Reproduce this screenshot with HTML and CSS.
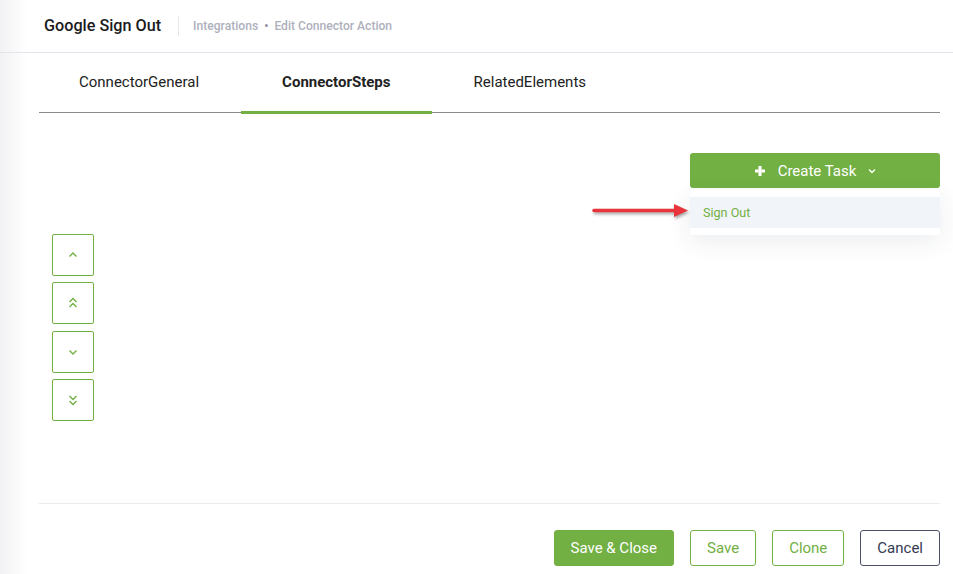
FILE: index.html
```html
<html>
    <head>
        <link rel="stylesheet" href="styles.css">
    </head>
    <body>
        <div class="header">
            <div class="title">Google Sign Out</div>
            <div class="crumbs">
                <span>Integrations</span>
                <span class="dot">&bull;</span>
                <span>Edit Connector Action</span>
            </div>
        </div>
        <div class="main">
            <div class="tabs">
                <div class="tab">ConnectorGeneral</div>
                <div class="tab active">ConnectorSteps</div>
                <div class="tab">RelatedElements</div>
            </div>
            <div class="panel">
                <div class="toolbar">
                    <div class="create-wrap">
                        <button class="create">
                            <svg width="12" height="12" viewBox="0 0 12 12"><path d="M6 1v10M1 6h10" stroke="#fff" stroke-width="3"/></svg>
                            <span>Create Task</span>
                            <svg width="8" height="6" viewBox="0 0 8 6"><path d="M1 1.5l3 3 3-3" fill="none" stroke="#fff" stroke-width="1.3"/></svg>
                        </button>
                        <div class="menu">
                            <div class="menu-item">Sign Out</div>
                        </div>
                        <svg class="pointer" width="100" height="20" viewBox="0 0 100 20">
                            <path d="M2 9.5h82" stroke="#e8343a" stroke-width="3.5" stroke-linecap="round"/>
                            <path d="M82 3l14 6.5-14 6.5z" fill="#e8343a"/>
                        </svg>
                    </div>
                </div>
                <div class="movers">
                    <button class="mover"><svg width="10" height="10" viewBox="0 0 10 10"><path d="M1.5 6.5l3.5-3.5 3.5 3.5" fill="none" stroke="#72b043" stroke-width="1.4"/></svg></button>
                    <button class="mover"><svg width="10" height="12" viewBox="0 0 10 12"><path d="M1.5 5l3.5-3.5 3.5 3.5M1.5 10l3.5-3.5 3.5 3.5" fill="none" stroke="#72b043" stroke-width="1.4"/></svg></button>
                    <button class="mover"><svg width="10" height="10" viewBox="0 0 10 10"><path d="M1.5 3.5l3.5 3.5 3.5-3.5" fill="none" stroke="#72b043" stroke-width="1.4"/></svg></button>
                    <button class="mover"><svg width="10" height="12" viewBox="0 0 10 12"><path d="M1.5 2l3.5 3.5 3.5-3.5M1.5 7l3.5 3.5 3.5-3.5" fill="none" stroke="#72b043" stroke-width="1.4"/></svg></button>
                </div>
            </div>
            <div class="footer">
                <button class="btn primary">Save &amp; Close</button>
                <button class="btn outline">Save</button>
                <button class="btn outline">Clone</button>
                <button class="btn cancel">Cancel</button>
            </div>
        </div>
    </body>
</html>
```
FILE: styles.css
```css
body{
    margin: 0;
    font-family: Roboto, "Liberation Sans", sans-serif;
    background: linear-gradient(to right, #f2f2f4, #fff 28px);
    color: #1d1d1f;
}
.header{
    height: 52px;
    display: flex;
    align-items: center;
    padding-left: 44px;
    border-bottom: 1px solid #e1e5ec;
}
.title{
    font-size: 16.2px;
    font-weight: 500;
    color: #1b1b1d;
    padding-right: 17px;
    border-right: 1px solid #e6e6ea;
    line-height: 20px;
}
.crumbs{
    padding-left: 14px;
    font-size: 12.1px;
    color: #aeb0bc;
    font-weight: 500;
}
.dot{
    margin: 0 3px;
    color: #8d8f9b;
}
.main{
    padding: 0 13px 0 39px;
}
.tabs{
    display: flex;
    height: 59px;
    border-bottom: 1px solid #8a8a8a;
}
.tabs .tab:first-child{
    margin-left: -1.5px;
}
.tab{
    padding: 0 41.5px 2px;
    font-size: 15px;
    color: #222;
    display: flex;
    align-items: center;
}
.tab.active{
    font-weight: 700;
    border-bottom: 3px solid #72b043;
    margin-bottom: -2px;
    padding-bottom: 0;
}
.panel{
    height: 390px;
    padding-top: 40px;
    box-sizing: border-box;
}
.toolbar{
    display: flex;
    justify-content: flex-end;
}
.create-wrap{
    position: relative;
    width: 250px;
}
.create{
    width: 100%;
    height: 35px;
    border: none;
    border-radius: 3px;
    background-color: #72b043;
    color: white;
    font-family: inherit;
    font-size: 15px;
    display: flex;
    align-items: center;
    justify-content: center;
    gap: 9px;
}
.create span{
    margin: 0 3px 0 3px;
}
.menu{
    position: absolute;
    top: 37px;
    left: 0;
    right: 0;
    background: white;
    padding: 7px 0;
    box-shadow: 0 6px 24px rgba(30, 40, 70, 0.09);
    border-radius: 2px;
}
.menu-item{
    background: #f1f4f8;
    height: 31px;
    line-height: 31px;
    padding-left: 13px;
    font-size: 12.6px;
    color: #72b043;
}
.pointer{
    position: absolute;
    top: 48px;
    left: -98px;
    filter: drop-shadow(1px 2px 1.5px rgba(0,0,0,0.35));
}
.movers{
    display: flex;
    flex-direction: column;
    gap: 6.3px;
    margin: 46px 0 0 13px;
}
.mover{
    width: 42px;
    height: 42px;
    border: 1px solid #72b043;
    border-radius: 2px;
    background: white;
    display: flex;
    align-items: center;
    justify-content: center;
    padding: 0;
}
.footer{
    border-top: 1px solid #ebebeb;
    display: flex;
    justify-content: flex-end;
    gap: 16px;
    padding-top: 26px;
}
.btn{
    height: 36px;
    padding: 0 16px;
    font-family: inherit;
    font-size: 15px;
    border-radius: 3px;
    background: white;
}
.primary{
    background-color: #72b043;
    border: 1px solid #72b043;
    color: white;
}
.outline{
    border: 1px solid #72b043;
    color: #72b043;
}
.cancel{
    border: 1px solid #4b5068;
    color: #333a52;
}
```
